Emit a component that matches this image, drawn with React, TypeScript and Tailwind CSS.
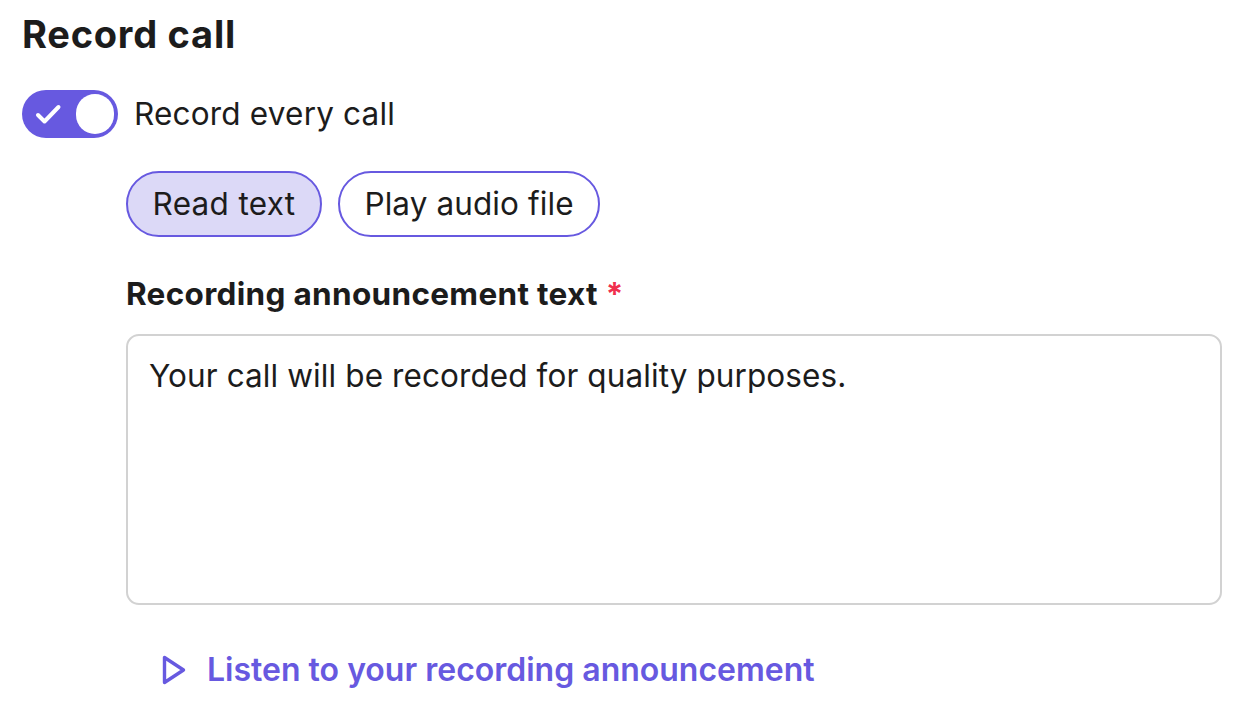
import { useState } from 'react'

export default function App() {
  const [recordAll, setRecordAll] = useState(true)
  const [mode, setMode] = useState<'text' | 'audio'>('text')

  return (
    <div className="min-h-screen bg-white pl-[22px] pr-[18px] pt-[11px] font-['Inter',sans-serif] text-[#1c1c1c]">
      <h2 className="text-[38px] font-bold leading-[46px] tracking-[0.02em]">Record call</h2>

      <div className="mt-[33px] flex items-center gap-[16px]">
        <button
          onClick={() => setRecordAll(!recordAll)}
          className="flex h-12 w-24 items-center rounded-full bg-[#6759e0] p-1"
        >
          <span className="flex w-[52px] justify-center pr-[4px]">
            <svg width="27" height="22" viewBox="0 0 27 22" fill="none">
              <path d="M3 12l6.5 6.5L23.5 4" stroke="white" strokeWidth="4" strokeLinecap="round" strokeLinejoin="round" />
            </svg>
          </span>
          <span className="h-10 w-10 rounded-full bg-white" />
        </button>
        <span className="text-[31.5px] leading-[40px] tracking-[0.006em]">Record every call</span>
      </div>

      <div className="pl-[104px]">
        <div className="mt-[33px] flex gap-4">
          <button
            onClick={() => setMode('text')}
            className={`h-[66px] rounded-full border-2 border-[#6759e0] px-[24.5px] text-[31.5px] tracking-[0.01em] ${mode === 'text' ? 'bg-[#dcd9f7]' : 'bg-white'}`}
          >
            Read text
          </button>
          <button
            onClick={() => setMode('audio')}
            className={`h-[66px] rounded-full border-2 border-[#6759e0] px-[24.5px] text-[31.5px] tracking-[0.003em] ${mode === 'audio' ? 'bg-[#dcd9f7]' : 'bg-white'}`}
          >
            Play audio file
          </button>
        </div>

        <label className="mt-[39px] block text-[31.5px] font-bold leading-[36px] tracking-[0.01em]">
          Recording announcement text <span className="text-[#f0304d]">*</span>
        </label>

        <textarea
          defaultValue="Your call will be recorded for quality purposes."
          className="mt-[22px] block h-[271px] w-full resize-none rounded-[13px] border-2 border-[#d2d2d2] px-[21px] pt-[20px] pb-[16px] text-[31.5px] leading-[40px] tracking-[0.003em] outline-none"
        />

        <button className="mt-[45px] ml-[36px] flex items-center gap-[21px] text-[#6759e0]">
          <svg width="24" height="30" viewBox="0 0 24 30" fill="none">
            <path d="M2.5 2.5v25L21.5 15z" stroke="currentColor" strokeWidth="3.4" strokeLinejoin="round" />
          </svg>
          <span className="text-[32px] font-semibold leading-[40px]">Listen to your recording announcement</span>
        </button>
      </div>
    </div>
  )
}
